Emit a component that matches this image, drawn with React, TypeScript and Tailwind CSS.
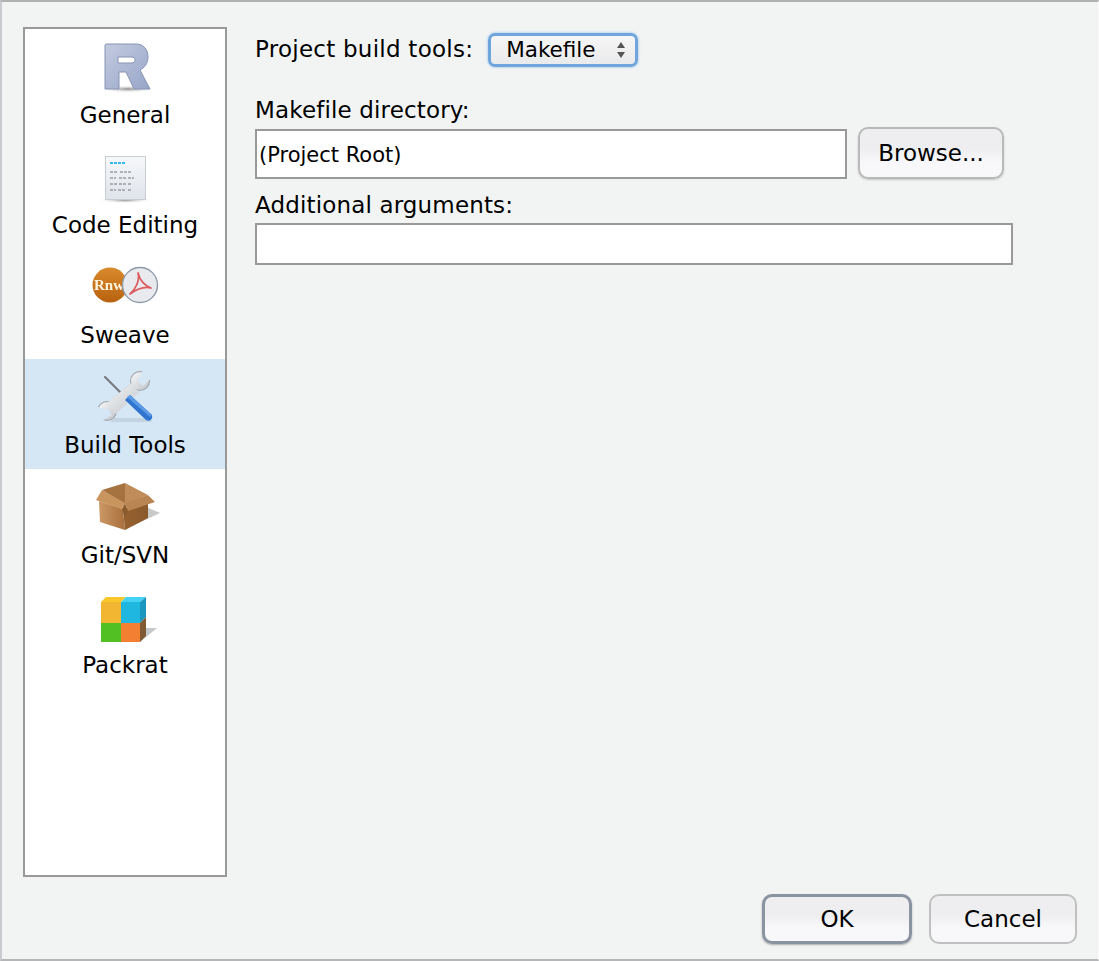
import React from "react";

/* ---------- Sidebar icons ---------- */
const GeneralIcon = () => (
  <svg className="blur-[0.4px]" width="70" height="60" viewBox="0 0 70 60">
    <defs>
      <linearGradient id="rFill" x1="0" y1="0" x2="1" y2="1">
        <stop offset="0" stopColor="#c3cbe0" />
        <stop offset="1" stopColor="#97a5c8" />
      </linearGradient>
      <radialGradient id="rShadow">
        <stop offset="0" stopColor="#8a8a8a" />
        <stop offset="1" stopColor="#ffffff" stopOpacity="0" />
      </radialGradient>
    </defs>
    <ellipse cx="38" cy="51" rx="29" ry="4" fill="url(#rShadow)" />
    <path
      fillRule="evenodd"
      d="M16 6H46C54 6 58 12 58 19C58 26 54 30 50 32L60 51H44L36 34H29V51H15V7Z M28 19V25H41C44 25 45 24 45 22C45 20 44 19 41 19Z"
      fill="url(#rFill)"
      stroke="#8794b4"
      strokeWidth="1"
    />
  </svg>
);

const CodeEditingIcon = () => (
  <svg className="blur-[0.4px]" width="70" height="60" viewBox="0 0 70 60">
    <defs>
      <linearGradient id="pageFill" x1="0" y1="0" x2="0" y2="1">
        <stop offset="0" stopColor="#f6f8fa" />
        <stop offset="1" stopColor="#dfe4ea" />
      </linearGradient>
      <radialGradient id="pageShadow">
        <stop offset="0" stopColor="#8a8a8a" />
        <stop offset="1" stopColor="#ffffff" stopOpacity="0" />
      </radialGradient>
    </defs>
    <ellipse cx="35" cy="52" rx="28" ry="3.5" fill="url(#pageShadow)" />
    <rect x="15.5" y="8.5" width="40" height="43" fill="url(#pageFill)" stroke="#c9ced4" />
    <path d="M20 15h16" stroke="#35b8ea" strokeWidth="2" strokeDasharray="3 1" />
    <g stroke="#9a9ea4" strokeWidth="1.6" strokeDasharray="3 1">
      <path d="M20 24h8M30 24h12" />
      <path d="M20 30h6M29 30h7M38 30h6" />
      <path d="M20 36h7M29 36h7M38 36h3" />
      <path d="M20 42h6M28 42h8M38 42h3" />
    </g>
  </svg>
);

const SweaveIcon = () => (
  <svg className="blur-[0.4px]" width="70" height="60" viewBox="0 0 70 60">
    <defs>
      <linearGradient id="rnwFill" x1="0" y1="0" x2="0" y2="1">
        <stop offset="0" stopColor="#d98a2c" />
        <stop offset="1" stopColor="#b8610f" />
      </linearGradient>
    </defs>
    <circle cx="20" cy="27" r="17.5" fill="url(#rnwFill)" />
    <text x="4" y="32" fill="#fdf3df" fontFamily="Liberation Serif, serif" fontWeight="700" fontSize="15">
      Rnw
    </text>
    <circle cx="50" cy="27" r="17.5" fill="#e8eaee" stroke="#8f99ab" strokeWidth="1.4" />
    <path
      d="M48 15C50 22 46 31 40 36C47 31 54 28 61 30C56 28 50 23 48 15Z"
      fill="none"
      stroke="#dc5b5f"
      strokeWidth="1.8"
      strokeLinejoin="round"
    />
  </svg>
);

const BuildToolsIcon = () => (
  <svg className="blur-[0.4px]" width="70" height="60" viewBox="0 0 70 60">
    <defs>
      <linearGradient id="steel" x1="0" y1="0" x2="1" y2="1">
        <stop offset="0" stopColor="#f8f9fa" />
        <stop offset="1" stopColor="#bfc3c8" />
      </linearGradient>
    </defs>
    <path d="M24 50H60L62 54H20Z" fill="#bccbd8" opacity="0.7" />
    <path d="M15 9L38 32" stroke="#777b80" strokeWidth="2.2" strokeLinecap="round" />
    {/* wrench: outline first, then fill, then the jaw openings */}
    <g fill="#9ca1a7">
      <circle cx="50" cy="13" r="10" />
      <circle cx="17" cy="43" r="10" />
      <path d="M44 19L23 37" stroke="#9ca1a7" strokeWidth="10" />
    </g>
    <g fill="url(#steel)">
      <circle cx="50" cy="13" r="9" />
      <circle cx="17" cy="43" r="9" />
      <path d="M41 15L49 24L26 46L16 36Z" />
    </g>
    <path d="M48 13L54 0L66 6L53 18Z" fill="#d5e6f5" />
    <path d="M19 42L4 38L8 55L22 47Z" fill="#d5e6f5" />
    <path d="M35 32L40 27L62 47C63 51 60 54 56 52Z" fill="#2f74cf" />
    <path d="M40 27L62 47L60 49L37 29Z" fill="#5c9ae6" />
  </svg>
);

const GitIcon = () => (
  <svg className="blur-[0.4px]" width="70" height="60" viewBox="0 0 70 60">
    <defs>
      <linearGradient id="boxLeft" x1="0" y1="0" x2="1" y2="0">
        <stop offset="0" stopColor="#cb9866" />
        <stop offset="1" stopColor="#a8703c" />
      </linearGradient>
      <linearGradient id="boxRight" x1="0" y1="0" x2="1" y2="0">
        <stop offset="0" stopColor="#96612f" />
        <stop offset="1" stopColor="#8a5a2c" />
      </linearGradient>
    </defs>
    <path d="M52 27L70 35L40 49Z" fill="#c9c9c9" />
    <path d="M12 12L35 5V26Z" fill="#a5733f" />
    <path d="M35 5L58 17L35 26Z" fill="#c08d5a" />
    <path d="M9 23L33 31L35 52L10 44Z" fill="url(#boxLeft)" />
    <path d="M33 31L58 25V40L35 52Z" fill="url(#boxRight)" />
    <path d="M32 31L35 25L38 33L35 40Z" fill="#8a5a2c" />
    <path d="M12 12L6 22L32 31L35 25Z" fill="#c8955f" />
    <path d="M58 17L65 24L38 33L35 25Z" fill="#b98552" />
  </svg>
);

const PackratIcon = () => (
  <svg className="blur-[0.3px]" width="70" height="60" viewBox="0 0 70 60">
    <path d="M50 54L67 40H56Z" fill="#c4c8ca" />
    <path d="M11 14L16 9H36L31 14Z" fill="#fbc62a" />
    <path d="M31 14L36 9H56L50 14Z" fill="#44d2f6" />
    <path d="M50 14L56 9V29L50 35Z" fill="#1a97bd" />
    <path d="M50 35L56 29V48L50 54Z" fill="#7f5a33" />
    <rect x="11" y="14" width="20" height="21" fill="#f2b632" />
    <rect x="31" y="14" width="19" height="21" fill="#1fb7df" />
    <rect x="11" y="35" width="20" height="19" fill="#52bf22" />
    <rect x="31" y="35" width="19" height="19" fill="#f37f33" />
  </svg>
);

const navItems = [
  { label: "General", icon: <GeneralIcon /> },
  { label: "Code Editing", icon: <CodeEditingIcon /> },
  { label: "Sweave", icon: <SweaveIcon /> },
  { label: "Build Tools", icon: <BuildToolsIcon />, active: true },
  { label: "Git/SVN", icon: <GitIcon /> },
  { label: "Packrat", icon: <PackratIcon /> },
];

const buttonClass =
  "rounded-[10px] border-2 bg-gradient-to-b from-[#eeeef0] from-40% to-[#f8f8fa] to-70% text-[23px] leading-none text-black";

export default function App() {
  return (
    <div className="flex h-[961px] w-[1099px] border-t-[2px] border-r border-b-2 border-l-2 border-t-[#b0b1b3] border-r-[#fafafa] border-b-[#b4b6b8] border-l-[#c9cbce] bg-[#f2f4f4] pl-[21px] pt-[25px] pb-[15px] font-['DejaVu_Sans',sans-serif] text-black">
      {/* sidebar */}
      <nav className="h-[850px] w-[204px] shrink-0 border-2 border-[#999999] bg-white">
        {navItems.map((item) => (
          <div
            key={item.label}
            className={`flex h-[110px] flex-col items-center pt-[9px] ${item.active ? "bg-[#d5e6f5]" : ""}`}
          >
            {item.icon}
            <div className="mt-[3px] text-[23px] leading-[28px]">{item.label}</div>
          </div>
        ))}
      </nav>

      {/* build tools pane */}
      <div className="ml-[28px] flex flex-1 flex-col pr-[21px]">
        <div className="flex h-[44px] items-center">
          <span className="text-[23px] leading-none tracking-[0.25px]">Project build tools:</span>
          <button className="ml-[15px] mt-[1px] flex h-[34px] w-[150px] items-center rounded-[7px] border-[3px] border-[#6fa5dc] bg-gradient-to-b from-[#f6f6f7] to-[#e9eaeb] pl-[15px] pr-[9px] text-[21.5px] leading-none shadow-[0_0_3px_#8fbbe8]">
            <span>Makefile</span>
            <svg className="ml-auto" width="10" height="18" viewBox="0 0 10 18">
              <path d="M5 1L9 7H1Z M5 17L1 11H9Z" fill="#555555" />
            </svg>
          </button>
        </div>

        <div className="mt-[25px] text-[23px] leading-[28px] tracking-[0.15px]">Makefile directory:</div>
        <div className="mt-[3px] flex items-start">
          <div className="mt-[2px] flex h-[50px] w-[592px] items-center border-2 border-[#999999] bg-white pl-[2px] pt-[4px] text-[21px]">
            (Project Root)
          </div>
          <button className={`ml-[11px] h-[52px] w-[146px] border-[#b9b9b9] shadow-[0_1px_2px_#c4c4c4] ${buttonClass}`}>
            Browse...
          </button>
        </div>

        <div className="mt-[12px] text-[23px] leading-[28px] tracking-[0.15px]">Additional arguments:</div>
        <div className="mt-[4px] h-[42px] w-[758px] border-2 border-[#999999] bg-white" />

        <div className="mt-auto flex justify-end">
          <button className={`h-[50px] w-[150px] border-[3px] border-[#8a93a0] shadow-[0_1px_2px_#aaaaaa] ${buttonClass}`}>OK</button>
          <button className={`ml-[17px] h-[50px] w-[148px] border-[#c0c0c0] ${buttonClass}`}>Cancel</button>
        </div>
      </div>
    </div>
  );
}
